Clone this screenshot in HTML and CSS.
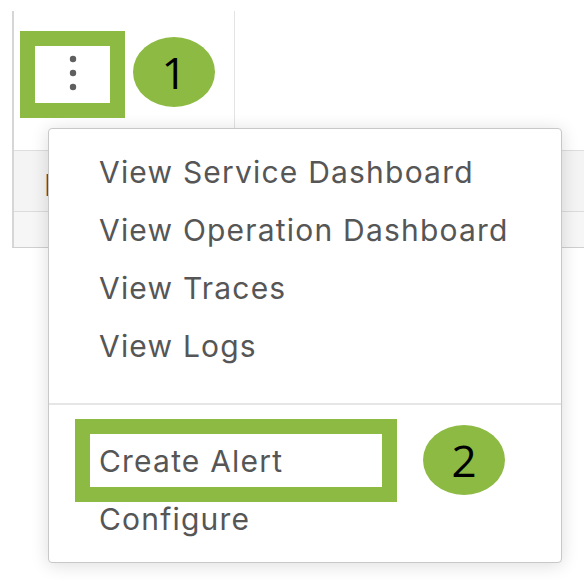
FILE: index.html
```html
<!DOCTYPE html>
<html>
<head>
<meta charset="utf-8">
<link rel="stylesheet" href="styles.css">
</head>
<body>
<div class="page">
  <div class="table">
    <div class="row head">
      <div class="cell first">
        <svg class="kebab" width="10" height="36" viewBox="0 0 10 36">
          <circle cx="5" cy="4" r="3.2" fill="#5f5f5f"/>
          <circle cx="5" cy="18" r="3.2" fill="#5f5f5f"/>
          <circle cx="5" cy="32" r="3.2" fill="#5f5f5f"/>
        </svg>
      </div>
      <div class="cell rest"></div>
    </div>
    <div class="row body">
      <div class="cell-text">Istio</div>
    </div>
    <div class="row body2"></div>
  </div>

  <div class="menu">
    <div class="section top">
      <div class="item">View Service Dashboard</div>
      <div class="item">View Operation Dashboard</div>
      <div class="item">View Traces</div>
      <div class="item">View Logs</div>
    </div>
    <div class="section bottom">
      <div class="item">Create Alert</div>
      <div class="item">Configure</div>
    </div>
  </div>

  <div class="mark mark1"></div>
  <div class="badge badge1">1</div>
  <div class="mark mark2"></div>
  <div class="badge badge2">2</div>
</div>
</body>
</html>
```
FILE: styles.css
```css
html, body {
  margin: 0;
  padding: 0;
  background: #ffffff;
}
.page {
  position: relative;
  width: 584px;
  height: 580px;
  overflow: hidden;
  padding-top: 11px;
  box-sizing: border-box;
  font-family: "Inter", "Noto Sans", sans-serif;
}
.table {
  margin-left: 12px;
  border-left: 2px solid #d6d6d6;
  border-bottom: 1px solid #cfcfcf;
  height: 236px;
  display: flex;
  flex-direction: column;
}
.row.head {
  display: flex;
  height: 139px;
  border-bottom: 1px solid #dedede;
  background: #ffffff;
}
.cell.first {
  width: 221px;
  border-right: 1px solid #e3e3e3;
  display: flex;
  justify-content: flex-start;
  padding-left: 54px;
  padding-top: 44px;
  box-sizing: border-box;
}
.kebab { display: block; }
.cell.rest { flex: 1; }
.row.body {
  height: 60px;
  border-bottom: 1px solid #dcdcdc;
  background: #f4f4f4;
  display: flex;
  align-items: flex-start;
}
.cell-text {
  padding-left: 30px;
  padding-top: 14px;
  font-size: 30px;
  line-height: 40px;
  color: #555;
}
.row.body2 {
  flex: 1;
  background: #f6f6f6;
}
.menu {
  position: absolute;
  left: 48px;
  top: 128px;
  width: 514px;
  height: 435px;
  box-sizing: border-box;
  background: #ffffff;
  border: 1px solid #c8c8c8;
  border-radius: 4px;
  box-shadow: 0 2px 18px rgba(0, 0, 0, 0.14);
}
.section.top {
  padding-top: 14px;
  padding-bottom: 28px;
  border-bottom: 2px solid #e6e6e6;
}
.section.bottom {
  padding-top: 27px;
}
.item {
  height: 58px;
  line-height: 58px;
  padding-left: 50px;
  font-size: 30px;
  color: #565656;
  letter-spacing: 1.2px;
  white-space: nowrap;
}
.mark {
  position: absolute;
  border: 15px solid #8cba43;
  box-sizing: border-box;
}
.mark1 { left: 20px; top: 31px; width: 105px; height: 87px; }
.mark2 { left: 75px; top: 419px; width: 322px; height: 83px; }
.badge {
  position: absolute;
  width: 82px;
  height: 70px;
  border-radius: 50%;
  background: #8cba43;
  color: #000;
  font-family: "Open Sans", "Noto Sans", sans-serif;
  font-size: 44px;
  line-height: 70px;
  text-align: center;
}
.badge1 { left: 133px; top: 37px; }
.badge2 { left: 423px; top: 425px; }
```
